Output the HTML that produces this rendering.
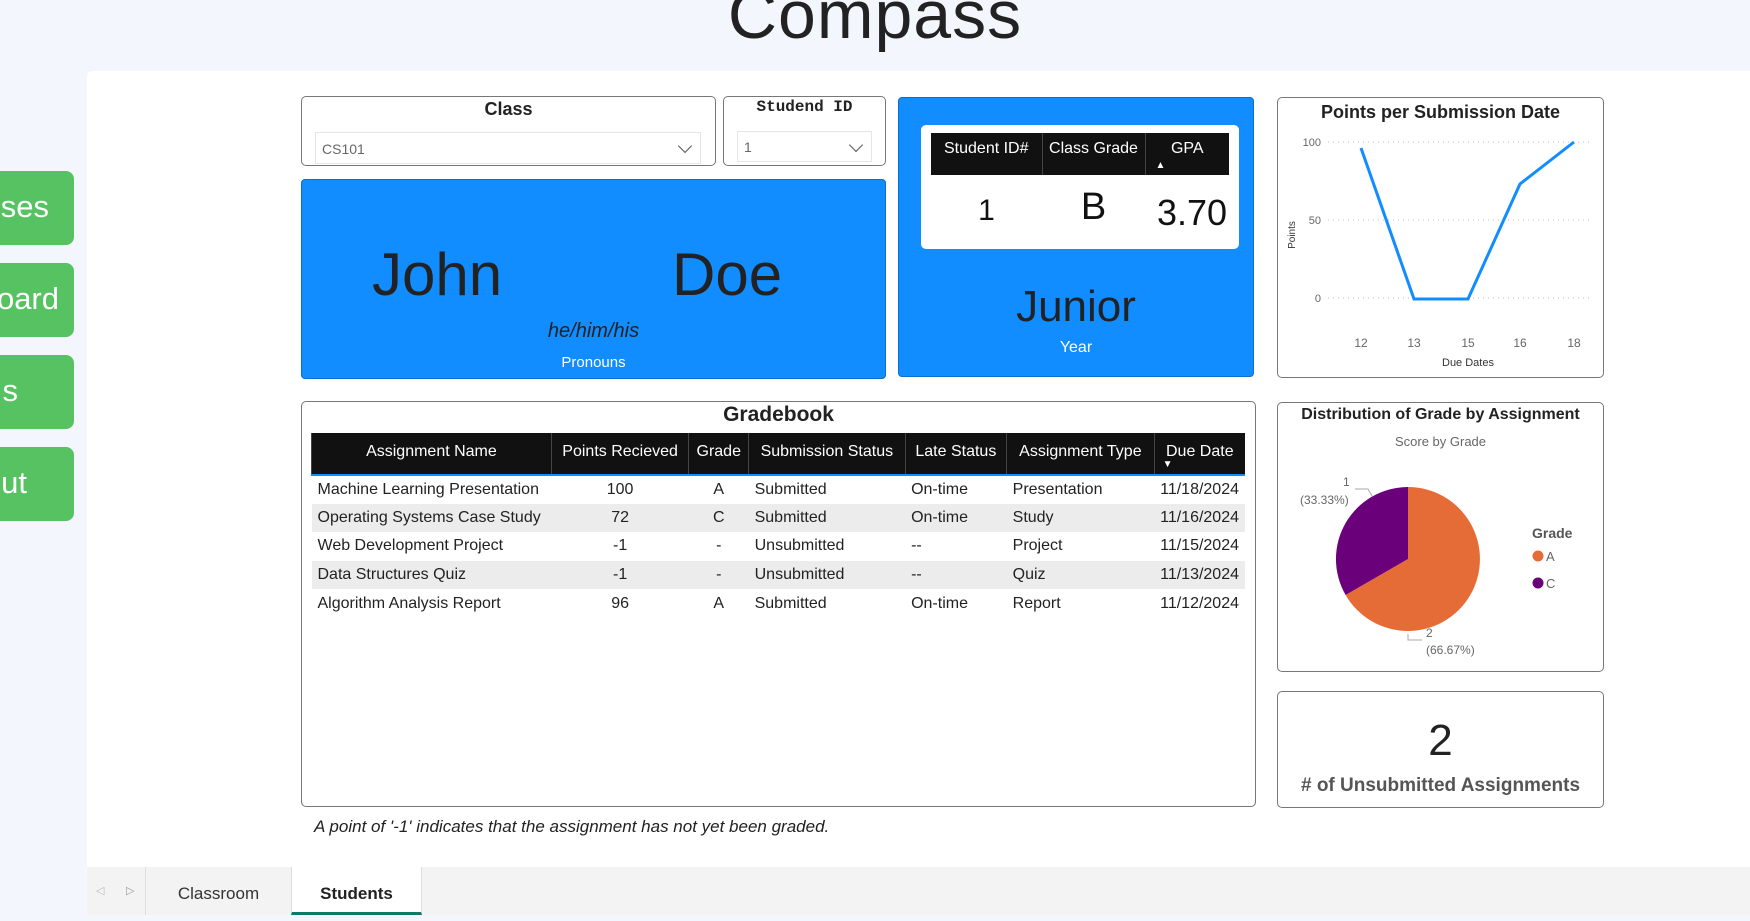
<!DOCTYPE html>
<html><head><meta charset="utf-8"><style>
*{margin:0;padding:0;box-sizing:border-box}
body{width:1750px;height:915px;overflow:hidden;background:#f3f7fd;font-family:"Liberation Sans",sans-serif;position:relative;color:#222}
.a{position:absolute}
.title{left:0;width:1750px;text-align:center;top:-24px;font-size:68px;color:#222;letter-spacing:1px}
.btn{left:0;width:74px;height:74px;background:#57c262;border-radius:0 8px 8px 0;color:#fff;font-size:31px;text-align:right;line-height:72px;overflow:hidden;white-space:nowrap;direction:rtl}
.panel{left:87px;top:71px;width:1663px;height:796px;background:#fff;border-radius:6px 0 0 0}
.box{border:1.5px solid #777;border-radius:5px;background:#fff}
.blue{background:#118dff;border:1px solid #0a6fcf;border-radius:4px}
.dd{border:1px solid #e6e6e6;background:#fff;color:#666;font-size:14px;padding-left:6px}
.chev{position:absolute;right:10px;top:8px;width:10px;height:10px;border-right:1.3px solid #555;border-bottom:1.3px solid #555;transform:rotate(45deg)}
table{border-collapse:collapse}
.gb{left:311px;top:433px;width:934px;font-size:16px}
.gb th{background:#111;color:#fff;font-weight:normal;height:42px;border-left:1px solid #444;border-bottom:2px solid #118dff;padding:0 3px 4px;white-space:nowrap}
.gb td{height:28.6px;padding:0 6px;white-space:nowrap}
.gb tr:nth-child(odd) td{background:#ececec}
.gb tr:nth-child(even) td{background:#fff}
</style></head><body>
<div class="a title">Compass</div>
<div class="a btn" style="top:171px;padding-right:25px">sses</div>
<div class="a btn" style="top:263px;padding-right:15px">oard</div>
<div class="a btn" style="top:355px;padding-right:56px">s</div>
<div class="a btn" style="top:447px;padding-right:47px">ut</div>
<div class="a panel"></div>

<div class="a box" style="left:301px;top:96px;width:415px;height:70px"></div>
<div class="a" style="left:301px;top:99px;width:415px;text-align:center;font-weight:bold;font-size:18px">Class</div>
<div class="a dd" style="left:315px;top:132px;width:386px;height:32px;line-height:32px">CS101<span class="chev"></span></div>
<div class="a box" style="left:723px;top:96px;width:163px;height:70px"></div>
<div class="a" style="left:723px;top:98px;width:163px;text-align:center;font-weight:bold;font-size:16px;font-family:'Liberation Mono',monospace">Studend ID</div>
<div class="a dd" style="left:737px;top:131px;width:135px;height:31px;line-height:31px">1<span class="chev"></span></div>

<div class="a blue" style="left:301px;top:179px;width:585px;height:200px"></div>
<div class="a" style="left:372px;top:240px;font-size:60px;color:#222">John</div>
<div class="a" style="left:672px;top:240px;font-size:60px;color:#222">Doe</div>
<div class="a" style="left:301px;top:320px;width:585px;text-align:center;font-size:20px;font-style:italic;color:#222">he/him/his</div>
<div class="a" style="left:301px;top:354px;width:585px;text-align:center;font-size:15px;color:#fff">Pronouns</div>

<div class="a blue" style="left:898px;top:97px;width:356px;height:280px"></div>
<div class="a" style="left:921px;top:125px;width:318px;height:124px;background:#fff;border-radius:5px"></div>
<table class="a" style="left:931px;top:133px;width:298px;font-size:16px;color:#fff">
<tr style="background:#111;height:42px"><th style="font-weight:normal;width:111px;border-right:1px solid #444;vertical-align:top;padding-top:7px">Student ID#</th><th style="font-weight:normal;width:103px;border-right:1px solid #444;vertical-align:top;padding-top:7px">Class Grade</th><th style="font-weight:normal;vertical-align:top;padding-top:7px;position:relative">GPA<span style="position:absolute;left:10px;top:27px;font-size:10px">▲</span></th></tr></table>
<div class="a" style="left:931px;top:194px;width:111px;text-align:center;font-size:30px;color:#111">1</div>
<div class="a" style="left:1042px;top:186px;width:103px;text-align:center;font-size:38px;color:#111">B</div>
<div class="a" style="left:1145px;top:192px;width:94px;text-align:center;font-size:36px;color:#111">3.70</div>
<div class="a" style="left:898px;top:282px;width:356px;text-align:center;font-size:44px;color:#222">Junior</div>
<div class="a" style="left:898px;top:339px;width:356px;text-align:center;font-size:16px;color:#fff">Year</div>

<div class="a box" style="left:1277px;top:97px;width:327px;height:281px"></div>
<div class="a" style="left:1277px;top:102px;width:327px;text-align:center;font-weight:bold;font-size:18px">Points per Submission Date</div>
<svg class="a" style="left:1277px;top:97px" width="327" height="281">
<g stroke="#bbb" stroke-dasharray="1,4" stroke-width="1"><line x1="51" y1="45" x2="313" y2="45"/><line x1="51" y1="123" x2="313" y2="123"/><line x1="51" y1="201" x2="313" y2="201"/></g>
<g font-family="Liberation Sans" font-size="11" fill="#666" text-anchor="end"><text x="44" y="49">100</text><text x="44" y="127">50</text><text x="44" y="205">0</text></g>
<g font-family="Liberation Sans" font-size="12" fill="#666" text-anchor="middle"><text x="84" y="250">12</text><text x="137" y="250">13</text><text x="191" y="250">15</text><text x="243" y="250">16</text><text x="297" y="250">18</text><text x="191" y="269" fill="#333" font-size="11">Due Dates</text></g>
<text transform="translate(18,138) rotate(-90)" font-family="Liberation Sans" font-size="10" fill="#333" text-anchor="middle">Points</text>
<polyline points="84,51 137,202 191,202 243,87 297,45" fill="none" stroke="#118dff" stroke-width="3"/>
</svg>

<div class="a box" style="left:301px;top:401px;width:955px;height:406px"></div>
<div class="a" style="left:301px;top:403px;width:955px;text-align:center;font-weight:bold;font-size:21px">Gradebook</div>
<table class="a gb">
<tr><th style="width:240px">Assignment Name</th><th style="width:138px">Points Recieved</th><th style="width:60px">Grade</th><th style="width:157px">Submission Status</th><th style="width:102px">Late Status</th><th style="width:148px">Assignment Type</th><th style="position:relative">Due Date<span style="position:absolute;left:8px;top:26px;font-size:10px">▼</span></th></tr>
<tr><td>Machine Learning Presentation</td><td style="text-align:center">100</td><td style="text-align:center">A</td><td>Submitted</td><td>On-time</td><td>Presentation</td><td>11/18/2024</td></tr>
<tr><td>Operating Systems Case Study</td><td style="text-align:center">72</td><td style="text-align:center">C</td><td>Submitted</td><td>On-time</td><td>Study</td><td>11/16/2024</td></tr>
<tr><td>Web Development Project</td><td style="text-align:center">-1</td><td style="text-align:center">-</td><td>Unsubmitted</td><td>--</td><td>Project</td><td>11/15/2024</td></tr>
<tr><td>Data Structures Quiz</td><td style="text-align:center">-1</td><td style="text-align:center">-</td><td>Unsubmitted</td><td>--</td><td>Quiz</td><td>11/13/2024</td></tr>
<tr><td>Algorithm Analysis Report</td><td style="text-align:center">96</td><td style="text-align:center">A</td><td>Submitted</td><td>On-time</td><td>Report</td><td>11/12/2024</td></tr>
</table>
<div class="a" style="left:314px;top:817px;font-size:17px;font-style:italic;color:#222">A point of '-1' indicates that the assignment has not yet been graded.</div>

<div class="a box" style="left:1277px;top:402px;width:327px;height:270px"></div>
<div class="a" style="left:1277px;top:406px;width:327px;text-align:center;font-weight:bold;font-size:16px">Distribution of Grade by Assignment</div>
<div class="a" style="left:1277px;top:434px;width:327px;text-align:center;font-size:13px;color:#666">Score by Grade</div>
<svg class="a" style="left:0;top:0" width="1750" height="915">
<path d="M1408 559 L1408 487 A72 72 0 1 1 1345.6 595 Z" fill="#e66c37"/>
<path d="M1408 559 L1345.6 595 A72 72 0 0 1 1408 487 Z" fill="#6b007b"/>
<polyline points="1355,489 1368,489 1372,496" fill="none" stroke="#aaa"/>
<polyline points="1408,634 1408,640 1422,640" fill="none" stroke="#aaa"/>
<g font-family="Liberation Sans" font-size="12" fill="#666"><text x="1343" y="486">1</text><text x="1300" y="504">(33.33%)</text><text x="1426" y="637">2</text><text x="1426" y="654">(66.67%)</text></g>
<text x="1532" y="538" font-family="Liberation Sans" font-size="14" font-weight="bold" fill="#555">Grade</text>
<circle cx="1538" cy="556" r="5.5" fill="#e66c37"/><text x="1546" y="561" font-family="Liberation Sans" font-size="13" fill="#666">A</text>
<circle cx="1538" cy="583" r="5.5" fill="#6b007b"/><text x="1546" y="588" font-family="Liberation Sans" font-size="13" fill="#666">C</text>
</svg>

<div class="a box" style="left:1277px;top:691px;width:327px;height:117px"></div>
<div class="a" style="left:1277px;top:716px;width:327px;text-align:center;font-size:44px;color:#222">2</div>
<div class="a" style="left:1277px;top:775px;width:327px;text-align:center;font-size:19px;font-weight:bold;color:#555">#&nbsp;of Unsubmitted Assignments</div>

<div class="a" style="left:87px;top:867px;width:1663px;height:48px;background:#f3f3f3"></div>
<div class="a" style="left:96px;top:884px;font-size:11px;color:#bbb">◁</div>
<div class="a" style="left:126px;top:884px;font-size:11px;color:#999">▷</div>
<div class="a" style="left:145px;top:867px;width:146px;height:48px;border-left:1px solid #ddd;text-align:center;line-height:54px;font-size:17px;color:#333">Classroom</div>
<div class="a" style="left:291px;top:867px;width:131px;height:48px;background:#fff;border-left:1px solid #ddd;border-right:1px solid #ddd;border-bottom:3px solid #117865;text-align:center;line-height:54px;font-size:17px;font-weight:bold;color:#222">Students</div>
</body></html>
